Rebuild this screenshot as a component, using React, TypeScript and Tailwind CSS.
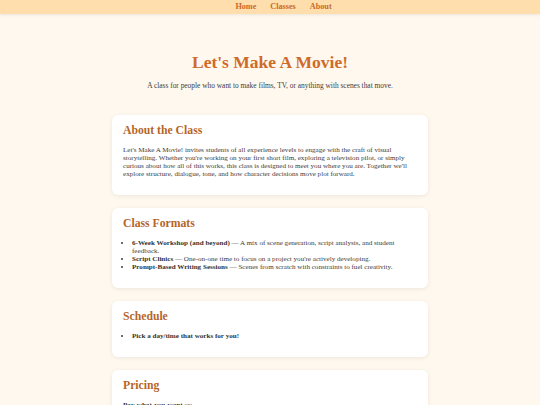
import React from "react";

const Card: React.FC<{ title: string; children: React.ReactNode }> = ({ title, children }) => (
  <section className="bg-white rounded-[6px] shadow-[0_1px_4px_rgba(0,0,0,0.08)] px-[11px] pt-[9px] pb-[17px]">
    <h2 className="text-[11.7px] leading-[14px] font-bold text-[#b5652a] mb-[8px]">{title}</h2>
    {children}
  </section>
);

export default function App() {
  return (
    <div className="min-h-screen bg-[#fff8ee] text-[#3d3d3d] [font-family:'Liberation_Serif',serif]">
      <nav className="h-[14px] bg-[#ffdeae] shadow-[0_1px_3px_rgba(0,0,0,0.08)] flex items-center justify-center gap-[14px] pl-[27px] text-[8.2px] font-bold text-[#c8692a]">
        <a>Home</a>
        <a>Classes</a>
        <a>About</a>
      </nav>

      <header className="text-center pt-[38px] pb-[25px]">
        <h1 className="text-[17.5px] leading-[20px] font-bold text-[#cf6a28]">Let's Make A Movie!</h1>
        <p className="mt-[10px] text-[7.4px] leading-[8px]">
          A class for people who want to make films, TV, or anything with scenes that move.
        </p>
      </header>

      <main className="w-[316px] mx-auto flex flex-col gap-[13px] text-[7.1px] leading-[8px]">
        <Card title="About the Class">
          <p>
            Let's Make A Movie! invites students of all experience levels to engage with the craft of visual
            storytelling. Whether you're working on your first short film, exploring a television pilot, or simply
            curious about how all of this works, this class is designed to meet you where you are. Together we'll
            explore structure, dialogue, tone, and how character decisions move plot forward.
          </p>
        </Card>

        <Card title="Class Formats">
          <ul className="list-disc pl-[9px]">
            <li>
              <strong className="text-[#333]">6-Week Workshop (and beyond)</strong> — A mix of scene generation, script
              analysis, and student feedback.
            </li>
            <li>
              <strong className="text-[#333]">Script Clinics</strong> — One-on-one time to focus on a project you're
              actively developing.
            </li>
            <li>
              <strong className="text-[#333]">Prompt-Based Writing Sessions</strong> — Scenes from scratch with
              constraints to fuel creativity.
            </li>
          </ul>
        </Card>

        <Card title="Schedule">
          <ul className="list-disc pl-[9px]">
            <li>
              <strong className="text-[#333]">Pick a day/time that works for you!</strong>
            </li>
          </ul>
        </Card>

        <Card title="Pricing">
          <p>
            <strong className="text-[#333]">Pay-what-you-want</strong> or:
          </p>
          <ul className="list-disc pl-[9px]">
            <li>Single session — flexible</li>
          </ul>
        </Card>
      </main>
    </div>
  );
}
